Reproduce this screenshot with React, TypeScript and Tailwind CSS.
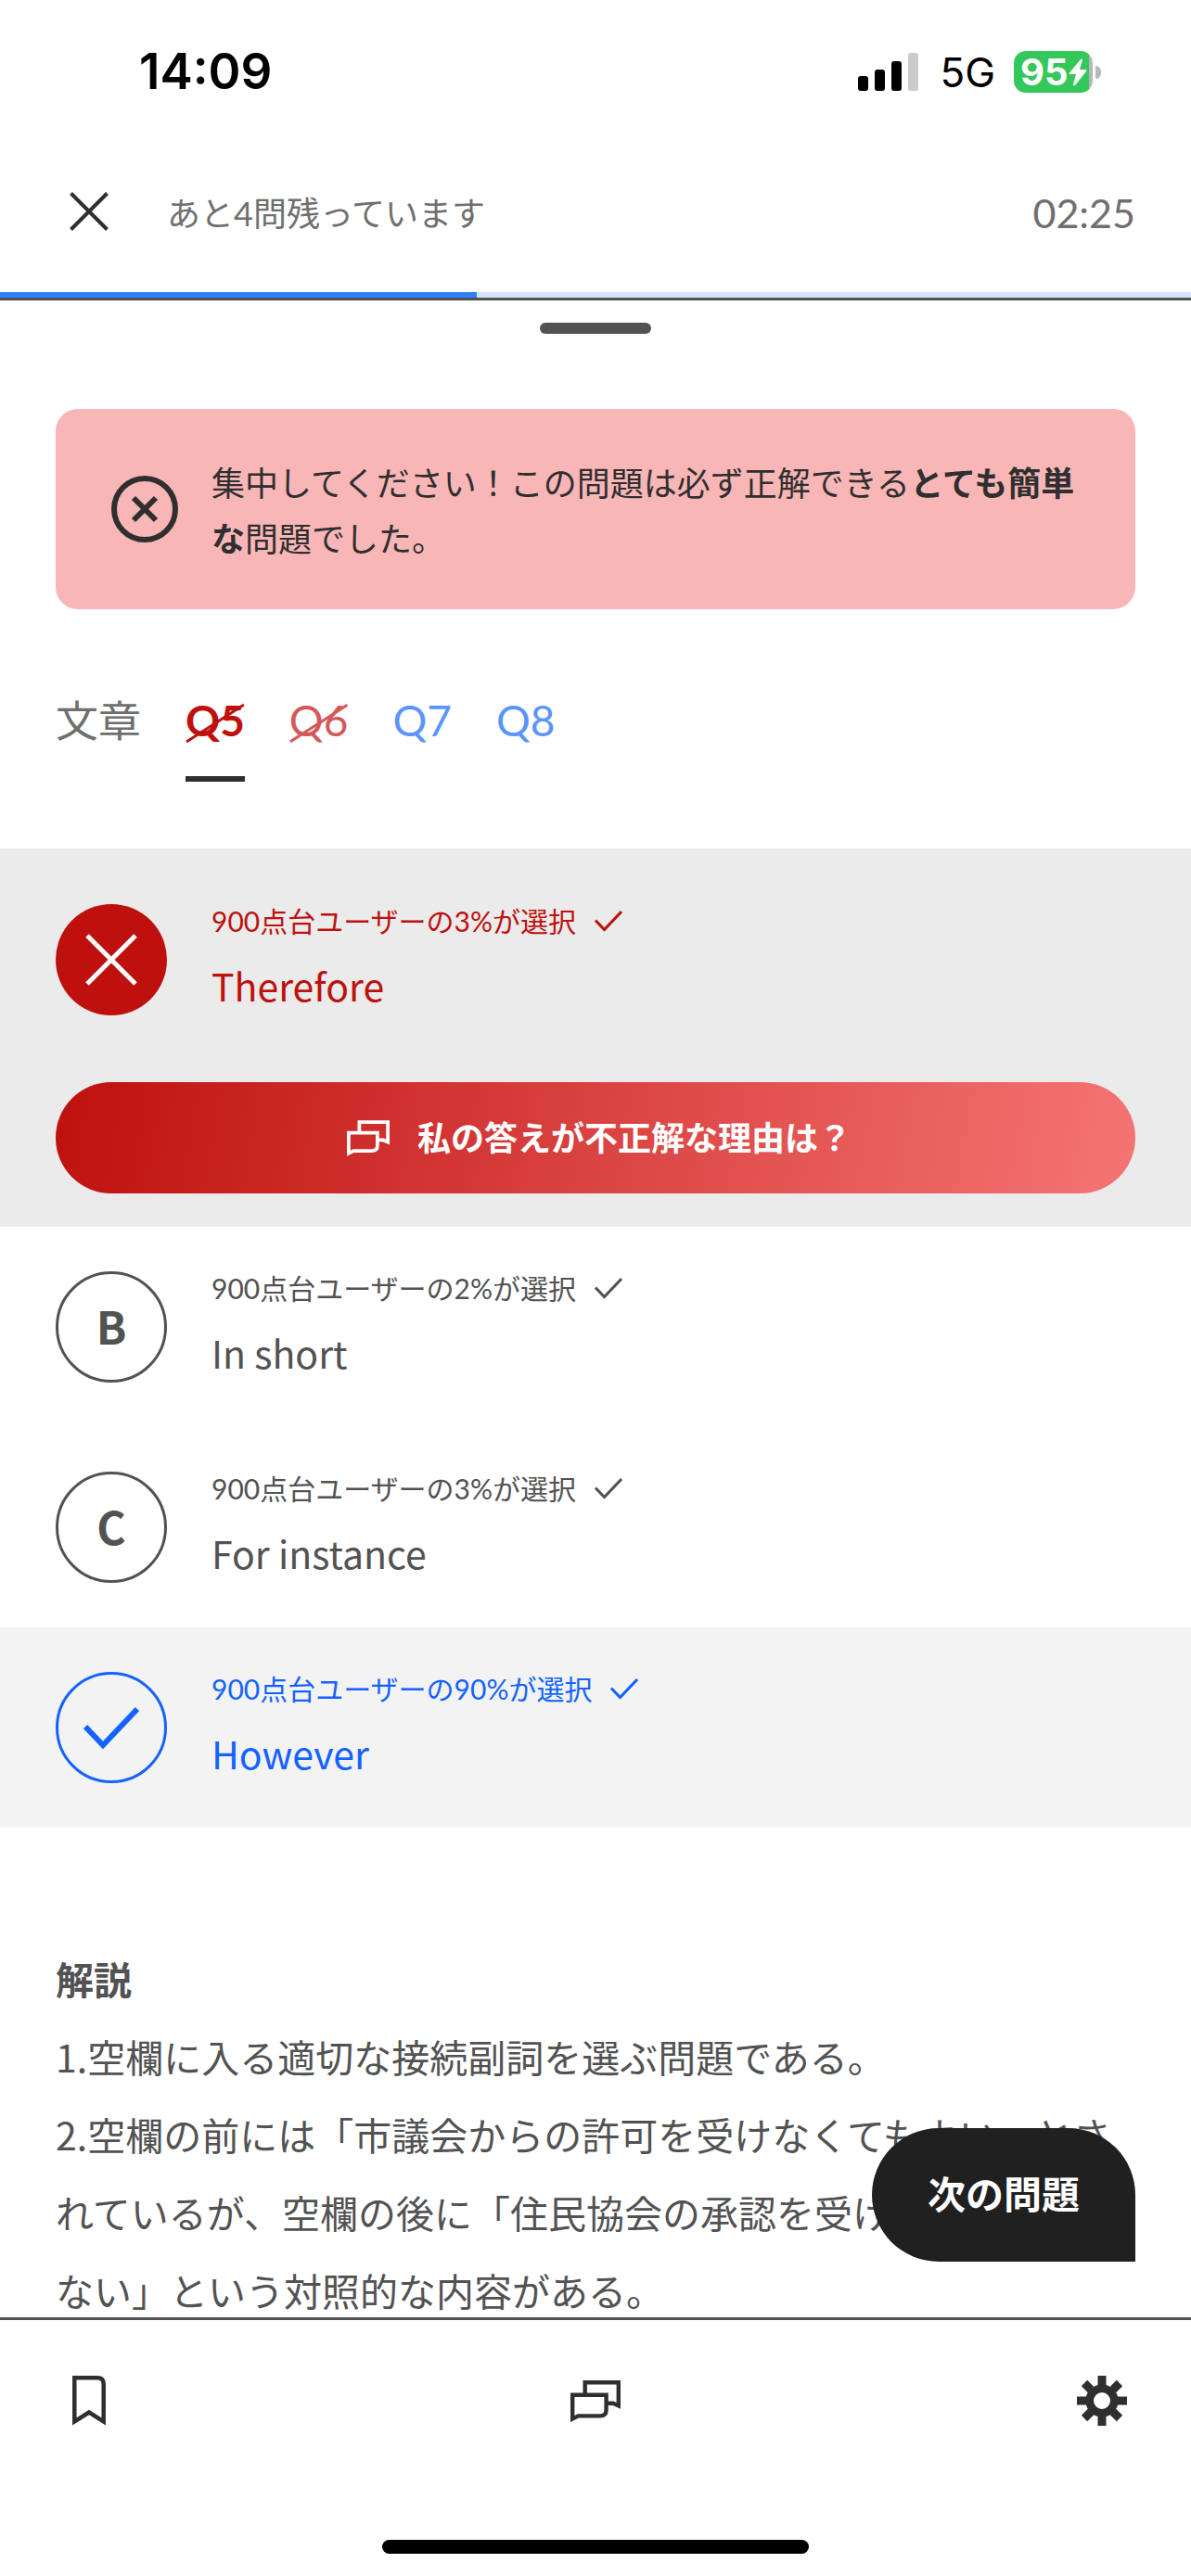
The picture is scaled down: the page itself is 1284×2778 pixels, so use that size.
import React from "react";

type OptionStatus = "wrong" | "plain" | "correct";

type Option = {
  letter: string;
  word: string;
  percent: number;
  status: OptionStatus;
};

const options: Option[] = [
  { letter: "A", word: "Therefore", percent: 3, status: "wrong" },
  { letter: "B", word: "In short", percent: 2, status: "plain" },
  { letter: "C", word: "For instance", percent: 3, status: "plain" },
  { letter: "D", word: "However", percent: 90, status: "correct" },
];

const rowStyles: Record<OptionStatus, string> = {
  wrong: "bg-[#ebebeb] pt-[60px] pb-9 text-[#be110e]",
  plain: "py-12 text-[#525252]",
  correct: "bg-[#f3f3f3] py-12 text-[#1463ff]",
};

const CloseIcon = () => (
  <svg viewBox="0 0 42 42" className="size-[42px]" fill="none" stroke="currentColor" strokeWidth="4">
    <path d="M1.5 1.5 40.5 40.5M40.5 1.5 1.5 40.5" />
  </svg>
);

const CheckIcon = ({ className }: { className: string }) => (
  <svg viewBox="0 0 60 46" className={className} fill="none" stroke="currentColor" strokeWidth="6">
    <path d="M2 22 21 42 58 3" />
  </svg>
);

const ChatIcon = ({ className }: { className: string }) => (
  <svg viewBox="0 0 54 45" className={className} fill="none" stroke="currentColor" strokeWidth="4.4">
    <path d="M15.7 14V2.2H51.8V27.4L46 24.8H40" />
    <path d="M2.2 15.7H38.6V32Q38.6 38.4 32 38.4H8.5L2.2 41.5Z" />
  </svg>
);

const StatusBar = () => (
  <div className="flex h-[141px] items-center justify-between pl-[150px] pr-[97px] pt-[14px] font-['Inter',sans-serif] text-black">
    <span className="text-[53px] font-semibold">14:09</span>
    <div className="flex items-center">
      <svg viewBox="0 0 66 42" className="mr-[22px] h-[42px] w-[66px]">
        <rect x="0" y="25" width="11" height="16" rx="3" />
        <rect x="18" y="18" width="11" height="23" rx="3" />
        <rect x="36" y="9" width="11" height="32" rx="3" />
        <rect x="54" y="0" width="11" height="41" rx="3" fill="#cbcbcb" />
      </svg>
      <span className="mr-5 text-[44px]">5G</span>
      <div className="flex items-center gap-[3px]">
        <div className="flex h-[45px] w-[85px] items-center rounded-[13px] bg-[linear-gradient(to_right,#34c759_81px,#b8b8b8_81px)] pl-[7px] text-white">
          <span className="text-[40px] leading-[45px] font-bold">95</span>
          <svg viewBox="0 0 20 30" className="h-[30px] w-5 shrink-0" fill="currentColor">
            <path d="M13 1 1 15.5Q0 17 2 17H8L5 28Q5 30 7 29L19 14Q20 12 18 12H12L15 2Q15 0 13 1Z" />
          </svg>
        </div>
        <div className="h-[14px] w-[6px] rounded-r-full bg-[#b8b8b8]" />
      </div>
    </div>
  </div>
);

const Header = () => (
  <header>
    <StatusBar />
    <div className="flex h-[174px] items-center pl-[75px] pr-[60px] text-[#6f6f6f]">
      <button type="button" aria-label="閉じる" className="text-[#2f2f2f]">
        <CloseIcon />
      </button>
      <p className="ml-[63px] flex-1 pt-1 text-[36px]">あと4問残っています</p>
      <time className="pt-1 text-[43px]">02:25</time>
    </div>
    <div className="h-[6px] bg-[#d3e4fd]">
      <div className="h-full w-2/5 bg-[#2f80fb]" />
    </div>
  </header>
);

const Notice = () => (
  <div className="mx-[60px] flex items-center gap-9 rounded-3xl bg-[#f9b6b7] py-12 pl-[60px] pr-[58px] text-[#2f2f2f]">
    <svg viewBox="0 0 72 72" className="size-[72px] shrink-0" fill="none" stroke="currentColor" strokeWidth="6">
      <circle cx="36" cy="36" r="33" />
      <path d="M24 24 48 48M48 24 24 48" />
    </svg>
    <p className="text-[36px] leading-[60px] font-['Noto_Sans_CJK_JP',sans-serif]">
      集中してください！この問題は必ず正解できる<b>とても簡単な</b>問題でした。
    </p>
  </div>
);

// diagonal stroke over the number of an incorrectly answered question
const Slash = () => (
  <svg viewBox="0 0 64 42" className="absolute inset-x-0 top-[18px] h-[42px] w-full" fill="none" stroke="currentColor" strokeWidth="3">
    <path d="M1 41 63 1" />
  </svg>
);

const Tabs = () => (
  <nav className="flex gap-12 px-[60px] text-[46px] leading-[72px]">
    <button type="button" className="h-[102px] pb-[30px] text-[#6f6f6f]">文章</button>
    <button type="button" className="relative h-[102px] border-b-[6px] border-[#2f2f2f] pb-6 font-bold text-[#be110e]">
      Q5
      <Slash />
    </button>
    <button type="button" className="relative h-[102px] pb-[30px] text-[#d35857]">
      Q6
      <Slash />
    </button>
    <button type="button" className="h-[102px] pb-[30px] text-[#5b94ff]">Q7</button>
    <button type="button" className="h-[102px] pb-[30px] text-[#5b94ff]">Q8</button>
  </nav>
);

const Badge = ({ option }: { option: Option }) => {
  if (option.status === "wrong") {
    return (
      <span className="flex size-[120px] shrink-0 items-center justify-center rounded-full bg-[#be110e] text-white">
        <svg viewBox="0 0 56 56" className="size-14" fill="none" stroke="currentColor" strokeWidth="5">
          <path d="M2 2 54 54M54 2 2 54" />
        </svg>
      </span>
    );
  }
  return (
    <span className="flex size-[120px] shrink-0 items-center justify-center rounded-full border-[3px] border-current text-[48px] font-bold">
      {option.status === "correct" ? (
        <CheckIcon className="h-[46px] w-[60px]" />
      ) : (
        <span className="pb-1">{option.letter}</span>
      )}
    </span>
  );
};

const OptionRow = ({ option }: { option: Option }) => (
  <li className={`px-[60px] ${rowStyles[option.status]}`}>
    <button type="button" className="flex w-full gap-12 text-left font-['Noto_Sans_CJK_JP',sans-serif]">
      <Badge option={option} />
      <span className="flex flex-col">
        <span className="flex items-center gap-5 font-['Lato','Noto_Sans_CJK_JP',sans-serif] text-[30px] leading-9">
          900点台ユーザーの{option.percent}%が選択
          <CheckIcon className="h-6 w-[30px]" />
        </span>
        <span className="mt-[18px] text-[41px] leading-[66px]">{option.word}</span>
      </span>
    </button>
    {option.status === "wrong" && (
      <button
        type="button"
        className="mt-[72px] flex h-[120px] w-full items-center justify-center gap-[30px] rounded-full bg-[linear-gradient(100deg,#be110e,#f57574)] pl-2 text-[36px] font-bold text-white"
      >
        <ChatIcon className="h-[39px] w-[46px]" />
        私の答えが不正解な理由は？
      </button>
    )}
  </li>
);

const Explanation = () => (
  <section className="mt-[120px] px-[60px] font-['Noto_Sans_CJK_JP',sans-serif] text-[41px] leading-[84px] text-[#525252]">
    <h2 className="font-bold">解説</h2>
    <p>1.空欄に入る適切な接続副詞を選ぶ問題である。</p>
    <p>
      2.空欄の前には「市議会からの許可を受けなくてもよい」とされているが、空欄の後に「住民協会の承認を受けなければならない」という対照的な内容がある。
    </p>
  </section>
);

const BottomBar = () => (
  <footer className="border-t-[3px] border-[#525252] bg-white text-[#2f2f2f]">
    <div className="flex h-[174px] items-center justify-between px-[69px]">
      <button type="button" aria-label="ブックマーク" className="flex w-[54px] justify-center">
        <svg viewBox="0 0 36 54" className="h-[54px] w-9" fill="none" stroke="currentColor" strokeWidth="4.5">
          <path d="M2.3 2.3H27Q33.7 2.3 33.7 9V49.5L18 39.5 2.3 49.5Z" />
        </svg>
      </button>
      <button type="button" aria-label="チャット">
        <ChatIcon className="h-[45px] w-[54px]" />
      </button>
      <button type="button" aria-label="設定">
        <svg viewBox="-27 -27 54 54" className="size-[54px]" fill="none" stroke="currentColor">
          <circle r="13.3" strokeWidth="8.6" />
          <path strokeWidth="9" d="M0-27V-16M0 27V16M-27 0H-16M27 0H16M-19-19-12-12M19 19 12 12M-19 19-12 12M19-19 12-12" />
        </svg>
      </button>
    </div>
    <div className="flex h-[102px] justify-center pt-[63px]">
      <div className="h-[15px] w-[460px] rounded-full bg-black" />
    </div>
  </footer>
);

const App = () => {
  return (
    <div className="flex h-screen flex-col bg-white font-['Lato','Noto_Sans_CJK_JP',sans-serif]">
      <Header />
      <main className="relative min-h-0 flex-1 border-t-[3px] border-[#525252]">
        <div className="h-full overflow-hidden">
          <div className="mx-auto mt-6 mb-[81px] h-3 w-[120px] rounded-full bg-[#525252]" />
          <Notice />
          <div className="mt-[84px] mb-[72px]">
            <Tabs />
          </div>
          <ul>
            {options.map((option) => (
              <OptionRow key={option.letter} option={option} />
            ))}
          </ul>
          <Explanation />
        </div>
        <button
          type="button"
          className="absolute right-[60px] bottom-[60px] h-36 rounded-[72px] rounded-br-none bg-[#202020] px-[60px] text-[41px] font-bold text-white"
        >
          次の問題
        </button>
      </main>
      <BottomBar />
    </div>
  );
};

export default App;
